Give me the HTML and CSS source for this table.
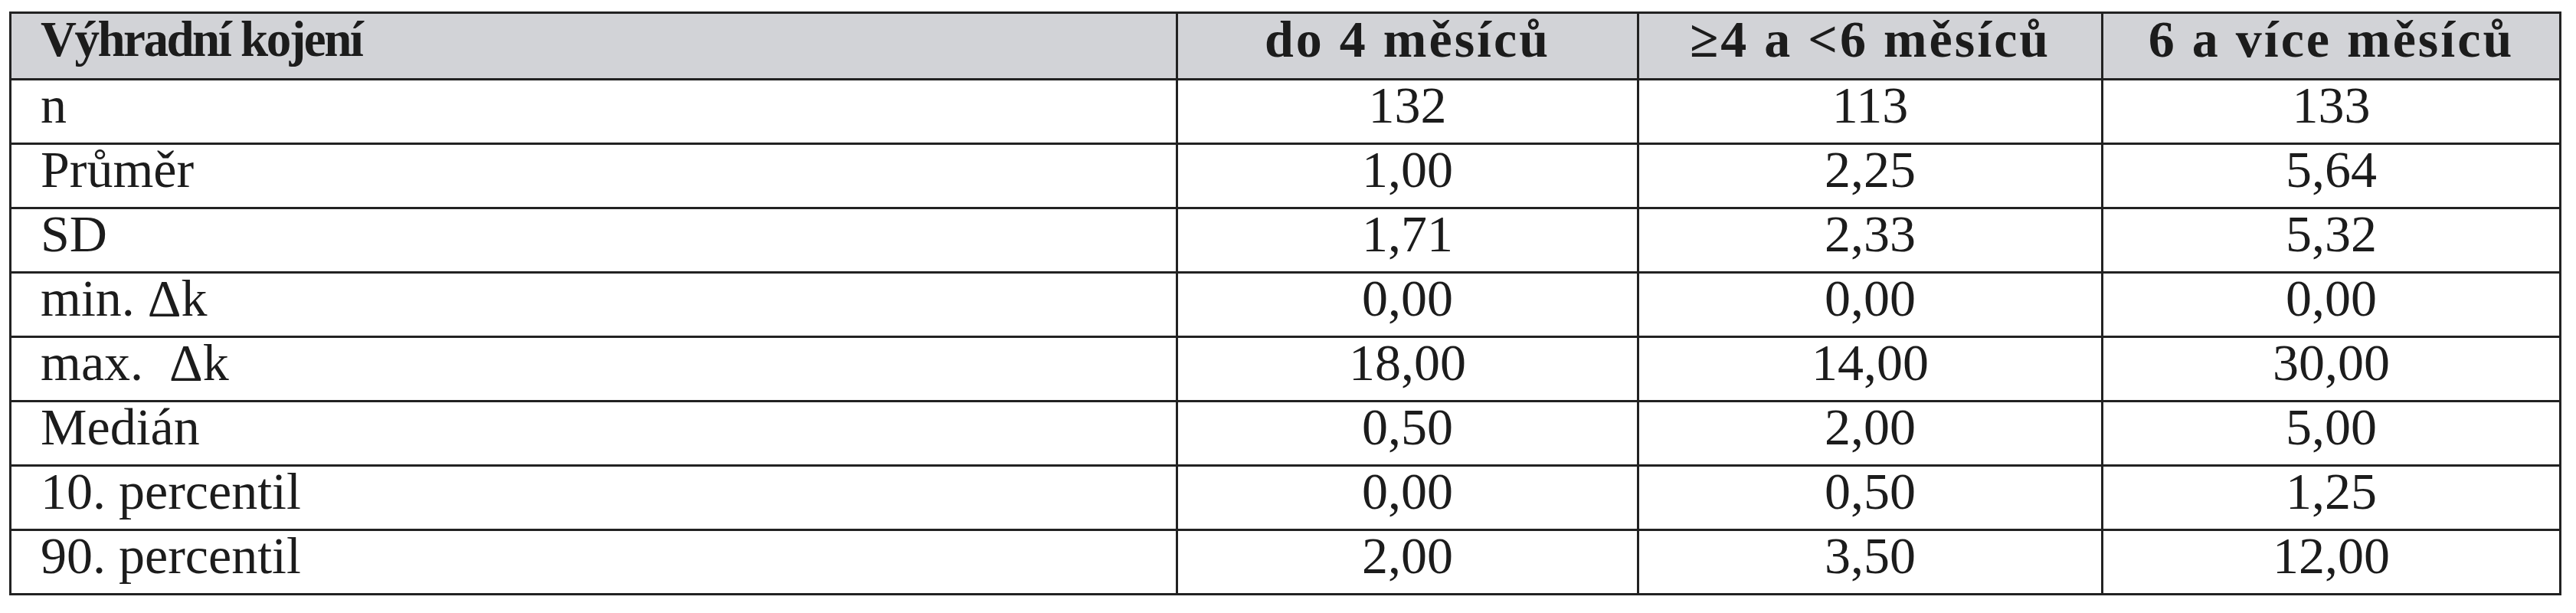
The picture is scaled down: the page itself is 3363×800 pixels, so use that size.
FILE: index.html
```html
<!DOCTYPE html>
<html lang="cs">
<head>
<meta charset="utf-8">
<title>Výhradní kojení</title>
<link rel="stylesheet" href="styles.css">
</head>
<body>
<table class="stats">
  <colgroup>
    <col class="c-label">
    <col class="c-a">
    <col class="c-b">
    <col class="c-c">
  </colgroup>
  <thead>
    <tr class="head">
      <th class="label">Výhradní kojení</th>
      <th class="grp">do 4 měsíců</th>
      <th class="grp">≥4 a &lt;6 měsíců</th>
      <th class="grp">6 a více měsíců</th>
    </tr>
  </thead>
  <tbody>
    <tr><td class="label">n</td><td>132</td><td>113</td><td>133</td></tr>
    <tr><td class="label">Průměr</td><td>1,00</td><td>2,25</td><td>5,64</td></tr>
    <tr><td class="label">SD</td><td>1,71</td><td>2,33</td><td>5,32</td></tr>
    <tr><td class="label">min. Δk</td><td>0,00</td><td>0,00</td><td>0,00</td></tr>
    <tr><td class="label">max.&nbsp; Δk</td><td>18,00</td><td>14,00</td><td>30,00</td></tr>
    <tr><td class="label">Medián</td><td>0,50</td><td>2,00</td><td>5,00</td></tr>
    <tr><td class="label">10. percentil</td><td>0,00</td><td>0,50</td><td>1,25</td></tr>
    <tr><td class="label">90. percentil</td><td>2,00</td><td>3,50</td><td>12,00</td></tr>
  </tbody>
</table>
</body>
</html>
```

FILE: styles.css
```css
html, body {
  background: #ffffff;
}
body {
  margin: 8px;
  font-family: "Liberation Serif", "Times New Roman", serif;
  color: #1c1c1c;
}
.stats {
  margin: 7px 0 0 4px;
  width: 3329px;
  border-collapse: collapse;
  table-layout: fixed;
  border: 3px solid #222222;
  font-size: 68px;
}
.c-label { width: 1523px; }
.c-a { width: 602px; }
.c-b { width: 606px; }
.c-c { width: 598px; }
.stats th,
.stats td {
  border: 3px solid #222222;
  padding: 0 0 16px 0;
  height: 65px;
  line-height: 65px;
  text-align: center;
  vertical-align: top;
  white-space: nowrap;
}
.stats th {
  font-weight: bold;
  height: 67px;
  line-height: 67px;
  padding-bottom: 17px;
  background: #d2d3d7;
}
.stats th.grp {
  letter-spacing: 3px;
}
.stats th.label {
  font-size: 65px;
  letter-spacing: -2.5px;
}
.stats .label {
  text-align: left;
  padding-left: 38px;
}
```
